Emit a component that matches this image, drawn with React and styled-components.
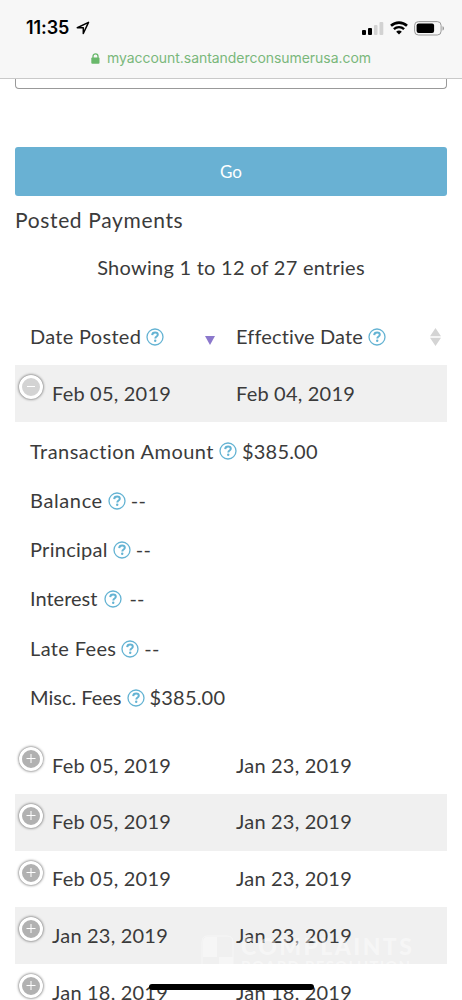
import React from 'react'
import styled, { createGlobalStyle } from 'styled-components'

const details = [
  { label: 'Transaction Amount', value: '$385.00', spacing: 0.47 },
  { label: 'Balance', value: '--', spacing: 0.62 },
  { label: 'Principal', value: '--', spacing: 0.28 },
  { label: 'Interest', value: '--', spacing: 0, gap: 7 },
  { label: 'Late Fees', value: '--', spacing: 0.36 },
  { label: 'Misc. Fees', value: '$385.00', spacing: 0 },
]

const payments = [
  { posted: 'Feb 05, 2019', effective: 'Jan 23, 2019' },
  { posted: 'Feb 05, 2019', effective: 'Jan 23, 2019', striped: true },
  { posted: 'Feb 05, 2019', effective: 'Jan 23, 2019' },
  { posted: 'Jan 23, 2019', effective: 'Jan 23, 2019', striped: true },
  { posted: 'Jan 18, 2019', effective: 'Jan 18, 2019' },
]

const HelpIcon = () => (
  <HelpSvg viewBox="0 0 18 18">
    <circle cx="9" cy="9" r="8" fill="none" stroke="#64b3d3" strokeWidth="1.3" />
    <path d="M6.2 7.1c.1-1.6 1.2-2.5 2.9-2.5 1.6 0 2.7.8 2.7 2.2 0 1.7-2.5 1.7-2.5 3.6" fill="none" stroke="#64b3d3" strokeWidth="2" />
    <circle cx="9.2" cy="12.7" r="1.2" fill="#64b3d3" />
  </HelpSvg>
)

const PaymentRow = ({ posted, effective, striped, open }) => (
  <Row $striped={striped}>
    <Toggle $open={open}>
      <svg width="18" height="18" viewBox="0 0 18 18">
        <path d={open ? 'M5 8.5h8' : 'M4.500 8.500h9M9 4v9'} stroke="#fff" strokeWidth="1" />
      </svg>
    </Toggle>
    <DateCell>{posted}</DateCell>
    <DateCell>{effective}</DateCell>
  </Row>
)

const App = () => {
  return (
    <React.Fragment>
      <GlobalStyle />
      <Screen>
        <BrowserHeader>
          <StatusBar>
            <Clock>
              11:35
              <svg width="14" height="14" viewBox="0 0 14 14">
                <path d="M1.3 6.7L12.5 1.4L7.3 12.5V6.7Z" fill="none" stroke="#000" strokeWidth="1.5" strokeLinejoin="round" />
              </svg>
            </Clock>
            <StatusIcons>
              <svg width="22" height="14" viewBox="0 0 22 14">
                <rect x="0" y="9" width="4" height="5" rx="1" />
                <rect x="6" y="7" width="4" height="7" rx="1" />
                <rect x="12" y="4" width="3.5" height="10" rx="1" fill="#d2d2d2" />
                <rect x="17.5" y="1" width="3.8" height="13" rx="1" fill="#d2d2d2" />
              </svg>
              <svg width="18" height="14" viewBox="0 0 18 14">
                <path d="M1 4.8C5.5 .6 12.5 .6 17 4.8" fill="none" stroke="#000" strokeWidth="2.6" />
                <path d="M3.9 8.1C6.8 5.4 11.2 5.4 14.1 8.1" fill="none" stroke="#000" strokeWidth="2.4" />
                <path d="M6.2 10.7C7.8 9.2 10.2 9.2 11.8 10.7L9 13.6Z" />
              </svg>
              <svg width="31" height="15" viewBox="0 0 31 15">
                <rect x=".6" y=".6" width="26.5" height="13.4" rx="3.8" fill="none" stroke="#999" />
                <rect x="2.6" y="2.6" width="17.5" height="9.4" rx="2" />
                <path d="M28.5 5.2c2 .7 2 3.6 0 4.4Z" fill="#999" />
              </svg>
            </StatusIcons>
          </StatusBar>
          <AddressBar>
            <svg width="9" height="11" viewBox="0 0 9 11">
              <path d="M2 5V3.2C2 .1 7 .1 7 3.2V5" fill="none" stroke="#69b86b" strokeWidth="1.3" />
              <rect x=".3" y="4.6" width="8.2" height="6.2" rx="1" fill="#69b86b" />
            </svg>
            <span>myaccount.santanderconsumerusa.com</span>
          </AddressBar>
        </BrowserHeader>
        <Content>
          <InputBottom />
          <GoButton>Go</GoButton>
          <Title>Posted Payments</Title>
          <Summary>Showing 1 to 12 of 27 entries</Summary>
          <TableHead>
            <HeadCell $spacing={0.3}>
              <span>Date Posted</span>
              <HelpIcon />
              <SortIcon width="10" height="9" viewBox="0 0 10 9">
                <path d="M0 0H10L5 9Z" fill="#8b78cc" />
              </SortIcon>
            </HeadCell>
            <HeadCell $spacing={0.14}>
              <span>Effective Date</span>
              <HelpIcon />
              <SortIcon $both width="11" height="18" viewBox="0 0 11 18">
                <path d="M0 8.3L5.5 0L11 8.3ZM0 9.7H11L5.5 18Z" fill="#d4d4d4" />
              </SortIcon>
            </HeadCell>
          </TableHead>
          <PaymentRow posted="Feb 05, 2019" effective="Feb 04, 2019" striped open />
          <Details>
            {details.map((item) => (
              <DetailLine key={item.label} $gap={item.gap}>
                <DetailLabel $spacing={item.spacing}>{item.label}</DetailLabel>
                <HelpIcon />
                <DetailValue>{item.value}</DetailValue>
              </DetailLine>
            ))}
          </Details>
          {payments.map((payment, index) => (
            <PaymentRow key={index} {...payment} />
          ))}
        </Content>
        <Watermark>
          <svg width="34" height="36" viewBox="0 0 34 36">
            <path d="M6 1H26Q32 1 32 7V35H1V7Q1 1 6 1Z" fill="none" stroke="#fff" strokeWidth="1" />
            <path d="M6 2H16V22H2V7Q2 2 6 2ZM18 22H32V35H18Z" fill="#fff" />
          </svg>
          <div>
            <WatermarkName>COMPLAINTS</WatermarkName>
            <WatermarkTag>BOARD RESOLUTION</WatermarkTag>
          </div>
        </Watermark>
        <HomeIndicator />
      </Screen>
    </React.Fragment>
  )
}

export default App

const GlobalStyle = createGlobalStyle`
  body {
    margin: 0;
    background: #fff;
  }
  * {
    box-sizing: border-box;
  }
  svg {
    display: block;
    flex-shrink: 0;
  }
`
const Screen = styled.div`
  position: relative;
  width: 462px;
  height: 1000px;
  overflow: hidden;
  background: #fff;
  color: #3b3b3b;
  font-family: Lato, sans-serif;
  font-size: 20px;
  line-height: 24px;
  white-space: nowrap;
`
const BrowserHeader = styled.header`
  height: 79px;
  background: #f7f7f7;
  border-bottom: 1px solid #c9c9c9;
`
const StatusBar = styled.div`
  display: flex;
  justify-content: space-between;
  height: 46px;
  padding: 16px 17px 0 26px;
`
const Clock = styled.div`
  display: flex;
  height: 24px;
  gap: 7px;
  color: #000;
  font-family: Inter, sans-serif;
  font-size: 18px;
  font-weight: 600;
  letter-spacing: -0.1px;
  svg {
    margin-top: 5px;
  }
`
const StatusIcons = styled.div`
  display: flex;
  height: 24px;
  align-items: center;
  gap: 6px;
`
const AddressBar = styled.div`
  display: flex;
  align-items: center;
  justify-content: center;
  height: 24px;
  gap: 7px;
  color: #7ab77b;
  font-family: Inter, sans-serif;
  font-size: 14px;
  letter-spacing: -0.05px;
`
const Content = styled.main`
  padding: 0 15px;
`
const InputBottom = styled.div`
  height: 10px;
  border: 1px solid #999;
  border-top: 0;
  border-radius: 0 0 4px 4px;
`
const GoButton = styled.button`
  display: block;
  width: 100%;
  height: 49px;
  margin-top: 58px;
  padding: 0;
  border: 0;
  border-radius: 3px;
  background: #69b1d3;
  color: #fff;
  font-family: Lato, sans-serif;
  font-size: 17px;
`
const Title = styled.h2`
  margin: 12px 0 0;
  font-size: 21px;
  font-weight: 400;
  line-height: 24px;
  letter-spacing: 0.65px;
`
const Summary = styled.p`
  margin: 23px 0 0;
  text-align: center;
  letter-spacing: 0.26px;
`
const TableHead = styled.div`
  display: grid;
  grid-template-columns: 206px 226px;
  height: 57px;
  margin-top: 29px;
`
const HeadCell = styled.div`
  display: flex;
  align-items: center;
  gap: 5px;
  padding: 0 6px 0 15px;
  letter-spacing: ${({ $spacing }) => $spacing}px;
  span {
    margin-top: -2px;
  }
`
const HelpSvg = styled.svg`
  width: 18px;
  height: 18px;
`
const SortIcon = styled.svg`
  margin-left: auto;
  margin-top: ${({ $both }) => ($both ? '0' : '8px')};
`
const Row = styled.div`
  display: grid;
  grid-template-columns: 37px 184px 1fr;
  height: 56.7px;
  background: ${({ $striped }) => ($striped ? '#f0f0f0' : '#fff')};
`
const Toggle = styled.div`
  display: flex;
  align-items: center;
  justify-content: center;
  width: 24px;
  height: 24px;
  margin: 10px 0 0 4px;
  border: 3px solid #fff;
  border-radius: 50%;
  background: ${({ $open }) => ($open ? '#d3d3d3' : '#b1b1b1')};
  box-shadow: 0 0 3px #444;
`
const DateCell = styled.div`
  padding-top: 15.6px;
  letter-spacing: 0.2px;
`
const Details = styled.div`
  height: 315.5px;
  padding: 5px 15px 0;
`
const DetailLine = styled.div`
  display: flex;
  align-items: center;
  height: 49.3px;
  gap: ${({ $gap }) => $gap || 5}px;
  span {
    margin-top: -1.5px;
  }
`
const DetailLabel = styled.span`
  letter-spacing: ${({ $spacing }) => $spacing}px;
`
const DetailValue = styled.span`
  letter-spacing: 0.2px;
`
const Watermark = styled.div`
  position: absolute;
  top: 935px;
  left: 201px;
  display: flex;
  height: 29px;
  gap: 6px;
  overflow: hidden;
  color: #fff;
  opacity: 0.45;
`
const WatermarkName = styled.div`
  font-size: 23px;
  font-weight: 900;
  letter-spacing: 2.4px;
  line-height: 23px;
`
const WatermarkTag = styled.div`
  font-size: 15px;
  font-weight: 700;
  letter-spacing: 1.2px;
  line-height: 16px;
`
const HomeIndicator = styled.div`
  position: absolute;
  top: 984px;
  left: 149px;
  width: 165px;
  height: 6px;
  border-radius: 3px;
  background: #000;
`
